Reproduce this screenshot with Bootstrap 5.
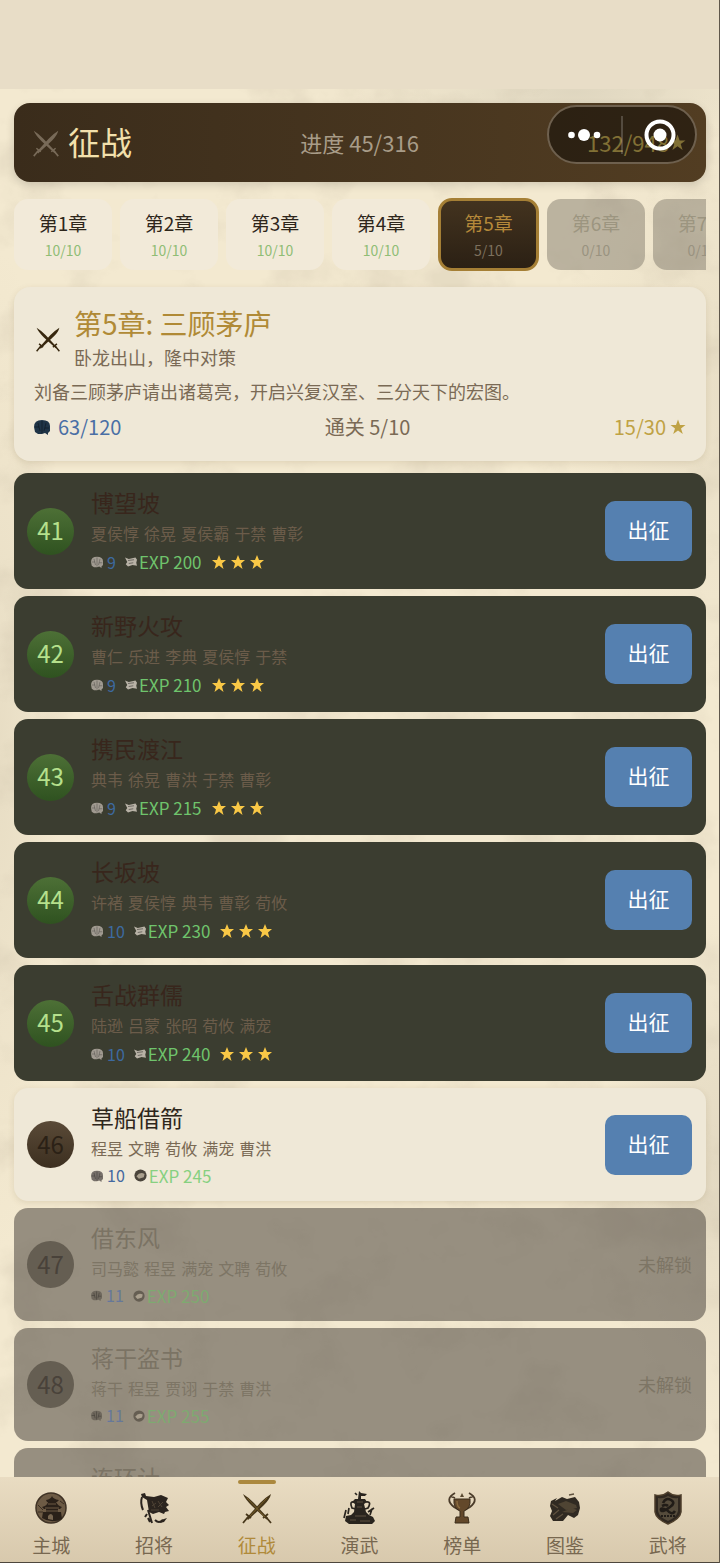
<!DOCTYPE html>
<html lang="zh-CN">
<head>
<meta charset="utf-8">
<meta name="viewport" content="width=device-width, initial-scale=1">
<title>征战</title>
<link href="https://cdn.jsdelivr.net/npm/bootstrap@5.3.0/dist/css/bootstrap.min.css" rel="stylesheet">
<style>
body{font-family:"Noto Sans CJK SC",sans-serif;color:#2e261b;background:#f2e8cf}
.app{border-right:1px solid #5f574b;background:radial-gradient(ellipse 60px 500px at 0 48%,#dcd1b880,transparent),radial-gradient(ellipse 220px 60px at 80% 92px,#d3cbb6a0,transparent),radial-gradient(ellipse 120px 260px at 100% 75%,#d6ccb690,transparent),radial-gradient(ellipse 160px 300px at 100% 25%,#dfd5bd80,transparent),#f3e9d0}
.paper{z-index:0;opacity:.22;pointer-events:none}
.statusbar{height:89px;background:#e8ddc7}
.content-area{padding:14px 13px 0 14px}
.hero{height:79px;padding:0 20px 0 18px;border-radius:16px;background:linear-gradient(90deg,#3a2c1b,#523d22);box-shadow:0 3px 8px #0002;margin-bottom:16px;font-size:22px;color:#a89c88}
.hero h1{font-size:32px;line-height:40px;color:#f2e0ac;font-weight:400}
.hero .total{color:#dfc15c}
.capsule{z-index:3;top:105px;right:22px;width:150px;height:59px;border:2px solid #6e604e;border-radius:30px;background:rgba(0,0,0,.42)}
.capsule i{width:2px;height:38px;background:#ffffff30}
.capsule button{border:0;background:none;padding:0;flex:1}
.chapters{gap:8px;margin-bottom:16px}
.chap{flex:0 0 98px;height:71px;border:0;border-radius:14px;background:#f2ead9;color:#2e261b;font-size:19px;line-height:28px;padding:2px 0 0}
.chap small{display:block;font-size:14px;line-height:26px;color:#8fbd75}
.chap.on{flex-basis:101px;height:73px;border:3px solid #a57f35;background:linear-gradient(#43331f,#2b2014);color:#b5893a}
.chap.on small{color:#7d705d}
.chap:disabled{background:#78726473;color:#9c9580}
.chap:disabled small{color:#999280}
.intro{border-radius:16px;background:#efe8d7;box-shadow:0 2px 6px #6b583225;padding:18px 20px 16px;margin-bottom:12px;color:#7a6a55;font-size:18px;line-height:36px}
.intro h2{font-size:28px;line-height:36px;color:#b08a36;font-weight:400}
.intro .lead-in{gap:13px;padding-left:1px}
.intro .sub{line-height:32px}
.intro .stats{font-size:20px}
.blue{color:#4a6fa5}.gold{color:#bfa244}
.stages{gap:7px}
.stage{border-radius:14px;padding:14px 14px 14px 13px;background:#3b3d30;color:#38261c}
.num{width:47px;height:47px;border-radius:50%;font-size:24px;line-height:28px;background:linear-gradient(#4d7036,#2f5220);color:#b5e08c;margin-right:17px;padding-bottom:2px}
.stage h3{font-size:23px;line-height:30px;font-weight:400}
.foes{font-family:"DejaVu Sans","Noto Sans CJK SC",sans-serif;font-size:16px;line-height:28px;color:#6b5c4a}
.info{font-size:17px;line-height:26px;color:#6fc46c}
.info svg{flex:none}
.info .cost{font-size:16px;color:#3d6aa0;margin:0 9px 0 4px}
.info .exp{margin:0 9px 0 2px}
.go{width:87px;height:60px;border:0;border-radius:10px;background:#5580b0;color:#fff;font-size:21px;padding-bottom:3px}
.stage.now{background:#efe8d7;color:#2e261b;box-shadow:0 2px 6px #6b583225}
.now .num{background:linear-gradient(#5a4a37,#3c2f20);color:#2b2116}
.now .foes{color:#7a6a55}.now .info{color:#86d080}.now .cost{color:#44689f}
.now .info,.locked .info{line-height:23px}
.stage.locked{background:#5a544b99;color:#7b7364}
.locked .num{background:#655e52;color:#49423a}
.locked .foes,.locked .state{color:#7d7565}
.locked .state{font-size:18px}
.locked .info{color:#7eaa70}.locked .cost{color:#66789a}
.stage.teaser{padding-left:77px;padding-bottom:65px}
.tabs{height:86px;background:linear-gradient(#e9dcc2,#d8c9ad);border-bottom:1px solid #4d463c;z-index:2}
.tabs a{flex:1 1 0;color:#786850;font-size:19px;line-height:28px;text-decoration:none;padding-top:13px}
.tabs svg{display:block;margin:0 auto 5px}
.tabs a.on{color:#b08a3a}
.tabs a.on::before{content:"";position:absolute;top:3px;left:50%;margin-left:-19px;width:38px;height:4px;border-radius:2px;background:#ab883e}
</style>
</head>
<body>
<svg width="0" height="0" class="position-absolute" aria-hidden="true">
<symbol id="swords" viewBox="0 0 32 32"><path d="M2 2Q7 5 13 11L27 26 25.500 27.500 11 14Q4 7 2 2ZM30 2Q29 7 23 13L7 28 5.500 26 19 11Q25 5 30 2Z"/><path d="M22 26L27 22M5 22L10 26M25 25L30 31M7 25L2 31" fill="none" stroke="currentColor" stroke-width="1.800"/></symbol>
<symbol id="fan" viewBox="0 0 16 16"><path d="M0 8Q0 1 8 1T16 7V12L14 14 14 16 11 14 8 15 4 15 1 13Z"/><path d="M8 2V14M4 4L6 12M12 4L10 12M1 8H5M11 9H15" stroke="#0005" fill="none"/></symbol>
<symbol id="scroll" viewBox="0 0 16 16"><path d="M0 2L5 4 14 2 16 5 15 9 16 13 10 12 4 14 1 11 3 8Z"/><path d="M4 6L12 5M5 10L11 9" stroke="#0008" fill="none"/></symbol>
<symbol id="coin" viewBox="0 0 16 16"><circle cx="8" cy="8" r="7.500"/><path d="M3 9Q7 3 13 6L12 10 6 12Z" fill="#aaa08e"/></symbol>
<symbol id="star" viewBox="0 0 16 16"><path d="M8 .5L10 6H15.500L11 9.400 12.800 15 8 11.600 3.200 15 5 9.400 .5 6H6Z"/></symbol>
<symbol id="stars" viewBox="0 0 54 16"><g fill="#f9c846"><path id="s1" d="M8 1L10 6H15L11 9.500 12.500 15 8 11.600 3.500 15 5 9.500 1 6H6Z"/><use href="#s1" x="19"/><use href="#s1" x="38"/></g></symbol>
</svg>
<div class="app position-relative d-flex flex-column vh-100 overflow-hidden">
<svg class="paper position-absolute w-100 h-100" aria-hidden="true"><filter id="grain"><feTurbulence type="fractalNoise" baseFrequency=".014 .016" numOctaves="5" seed="8"/><feColorMatrix values="0 0 0 0 .5 0 0 0 0 .43 0 0 0 0 .32 0 0 0 3 -1.500"/></filter><rect width="100%" height="100%" filter="url(#grain)"/></svg>
<div class="statusbar flex-shrink-0 position-relative"></div>
<div class="capsule position-absolute d-flex align-items-center">
<button class="d-flex justify-content-center" aria-label="更多"><svg width="34" height="14" fill="#fff"><circle cx="3.500" cy="7" r="3.300"/><circle cx="16" cy="7" r="6"/><circle cx="29" cy="7" r="3.300"/></svg></button><i></i>
<button class="d-flex justify-content-center" aria-label="关闭"><svg width="34" height="34"><circle cx="18" cy="17" r="13.500" fill="none" stroke="#fff" stroke-width="4"/><circle cx="18" cy="17" r="6.500" fill="#fff"/></svg></button>
</div>
<main class="content-area position-relative flex-grow-1 overflow-hidden">
<header class="hero d-flex align-items-center justify-content-between">
<div class="d-flex align-items-center"><svg width="28" height="28" fill="#786a58" color="#786a58" class="me-2"><use href="#swords"/></svg><h1 class="mb-1">征战</h1></div>
<span>进度 45/316</span>
<span class="total d-flex align-items-center">132/948<svg width="17" height="17" fill="currentColor"><use href="#star"/></svg></span>
</header>
<div class="chapters d-flex align-items-center overflow-hidden">
<button class="chap">第1章<small>10/10</small></button>
<button class="chap">第2章<small>10/10</small></button>
<button class="chap">第3章<small>10/10</small></button>
<button class="chap">第4章<small>10/10</small></button>
<button class="chap on">第5章<small>5/10</small></button>
<button class="chap" disabled>第6章<small>0/10</small></button>
<button class="chap" disabled>第7章<small>0/10</small></button>
</div>
<section class="intro">
<div class="lead-in d-flex align-items-center"><svg width="26" height="28" fill="#38280f" color="#38280f"><use href="#swords"/></svg><div><h2 class="m-0">第5章: 三顾茅庐</h2><div class="sub">卧龙出山，隆中对策</div></div></div>
<div>刘备三顾茅庐请出诸葛亮，开启兴复汉室、三分天下的宏图。</div>
<div class="stats d-flex justify-content-between"><span class="blue d-flex align-items-center"><svg width="16" height="16" fill="#1f3447" class="me-2"><use href="#fan"/></svg>63/120</span><span>通关 5/10</span><span class="gold d-flex align-items-center">15/30<svg width="16" height="16" fill="currentColor" class="ms-1"><use href="#star"/></svg></span></div>
</section>
<div class="stages d-flex flex-column">
<article class="stage d-flex align-items-center"><span class="num d-flex align-items-center justify-content-center">41</span><div class="flex-grow-1"><h3 class="mb-1">博望坡</h3><div class="foes">夏侯惇 徐晃 夏侯霸 于禁 曹彰</div><div class="info d-flex align-items-center"><svg width="12" height="12" fill="#a09a90"><use href="#fan"/></svg><span class="cost">9</span><svg width="12" height="12" fill="#b8b2a6"><use href="#scroll"/></svg><span class="exp">EXP 200</span><svg width="54" height="16"><use href="#stars"/></svg></div></div><button class="go">出征</button></article>
<article class="stage d-flex align-items-center"><span class="num d-flex align-items-center justify-content-center">42</span><div class="flex-grow-1"><h3 class="mb-1">新野火攻</h3><div class="foes">曹仁 乐进 李典 夏侯惇 于禁</div><div class="info d-flex align-items-center"><svg width="12" height="12" fill="#a09a90"><use href="#fan"/></svg><span class="cost">9</span><svg width="12" height="12" fill="#b8b2a6"><use href="#scroll"/></svg><span class="exp">EXP 210</span><svg width="54" height="16"><use href="#stars"/></svg></div></div><button class="go">出征</button></article>
<article class="stage d-flex align-items-center"><span class="num d-flex align-items-center justify-content-center">43</span><div class="flex-grow-1"><h3 class="mb-1">携民渡江</h3><div class="foes">典韦 徐晃 曹洪 于禁 曹彰</div><div class="info d-flex align-items-center"><svg width="12" height="12" fill="#a09a90"><use href="#fan"/></svg><span class="cost">9</span><svg width="12" height="12" fill="#b8b2a6"><use href="#scroll"/></svg><span class="exp">EXP 215</span><svg width="54" height="16"><use href="#stars"/></svg></div></div><button class="go">出征</button></article>
<article class="stage d-flex align-items-center"><span class="num d-flex align-items-center justify-content-center">44</span><div class="flex-grow-1"><h3 class="mb-1">长坂坡</h3><div class="foes">许褚 夏侯惇 典韦 曹彰 荀攸</div><div class="info d-flex align-items-center"><svg width="12" height="12" fill="#a09a90"><use href="#fan"/></svg><span class="cost">10</span><svg width="12" height="12" fill="#b8b2a6"><use href="#scroll"/></svg><span class="exp">EXP 230</span><svg width="54" height="16"><use href="#stars"/></svg></div></div><button class="go">出征</button></article>
<article class="stage d-flex align-items-center"><span class="num d-flex align-items-center justify-content-center">45</span><div class="flex-grow-1"><h3 class="mb-1">舌战群儒</h3><div class="foes">陆逊 吕蒙 张昭 荀攸 满宠</div><div class="info d-flex align-items-center"><svg width="12" height="12" fill="#a09a90"><use href="#fan"/></svg><span class="cost">10</span><svg width="12" height="12" fill="#b8b2a6"><use href="#scroll"/></svg><span class="exp">EXP 240</span><svg width="54" height="16"><use href="#stars"/></svg></div></div><button class="go">出征</button></article>
<article class="stage now d-flex align-items-center"><span class="num d-flex align-items-center justify-content-center">46</span><div class="flex-grow-1"><h3 class="mb-1">草船借箭</h3><div class="foes">程昱 文聘 荀攸 满宠 曹洪</div><div class="info d-flex align-items-center"><svg width="12" height="12" fill="#77706a"><use href="#fan"/></svg><span class="cost">10</span><svg width="13" height="13" fill="#4a443b"><use href="#coin"/></svg><span class="exp">EXP 245</span></div></div><button class="go">出征</button></article>
<article class="stage locked d-flex align-items-center"><span class="num d-flex align-items-center justify-content-center">47</span><div class="flex-grow-1"><h3 class="mb-1">借东风</h3><div class="foes">司马懿 程昱 满宠 文聘 荀攸</div><div class="info d-flex align-items-center"><svg width="11" height="11" fill="#6f685d"><use href="#fan"/></svg><span class="cost">11</span><svg width="12" height="12" fill="#655e52"><use href="#coin"/></svg><span class="exp">EXP 250</span></div></div><span class="state">未解锁</span></article>
<article class="stage locked d-flex align-items-center"><span class="num d-flex align-items-center justify-content-center">48</span><div class="flex-grow-1"><h3 class="mb-1">蒋干盗书</h3><div class="foes">蒋干 程昱 贾诩 于禁 曹洪</div><div class="info d-flex align-items-center"><svg width="11" height="11" fill="#6f685d"><use href="#fan"/></svg><span class="cost">11</span><svg width="12" height="12" fill="#655e52"><use href="#coin"/></svg><span class="exp">EXP 255</span></div></div><span class="state">未解锁</span></article>
<article class="stage locked teaser"><h3 class="mb-1">连环计</h3></article>
</div>
</main>
<nav class="tabs d-flex flex-shrink-0 text-center">
<a href="#"><svg width="34" height="36" viewBox="0 0 34 36"><circle cx="17" cy="18" r="15" fill="#6d5b45" stroke="#3f3225" stroke-width="1.500"/><path d="M12 10Q17 9 18 6Q19 9 25 10L23 12H13ZM8 17Q13 16 14 12H22Q24 16 28 17L26 19H10ZM12 19H24V22H12ZM9 22H27L28 29Q17 34 8 28Z" fill="#2a2119"/><path d="M14 29V26Q17 22 19 26V30Z" fill="#776650"/><path d="M14 14H22M11 18H25M12 21H24" stroke="#6d5b45"/><path d="M4 15L9 20M26 11L30 14M4 22H9" stroke="#3a2e22" fill="none"/></svg>主城</a>
<a href="#"><svg width="34" height="36" viewBox="0 0 34 36"><path d="M4 4L8 3 9 6 17 7 24 5 31 8 29 12 32 15 29 17 32 21 28 22 27 24 22 22 16 24 12 22 10 10 5 7Z" fill="#2b241e"/><path d="M5 7Q3 13 6 20M11 20L15 33M18 30Q22 34 26 30M11 28L13 32M10 24L8 27" stroke="#2b241e" stroke-width="2" fill="none"/><path d="M15 11L18 18M15 16L19 13M21 11L25 17M21 17L26 12M14 20H22" stroke="#4f4335" fill="none"/><path d="M24 30L30 28 27 32 23 33Z" fill="#2b241e"/></svg>招将</a>
<a href="#" class="on position-relative" aria-current="page"><svg width="34" height="36" viewBox="-1 0 34 36" fill="#46361a" color="#46361a"><use href="#swords" y="1" width="32" height="34"/><path d="M6 8L24 27M26 8L9 26" stroke="#8a6d2d" stroke-width=".7"/></svg>征战</a>
<a href="#"><svg width="34" height="36" viewBox="0 0 34 36" fill="#29241e"><path d="M16 1L18 3 24 4 22 6 18 6V9H22L24 12 21 14 23 22 26 25 30 27 32 31 29 34H6L2 31 3 26 8 25 11 22 12 14 9 12 12 9H15Z"/><path d="M12 3L14 5M11 12Q6 11 9 18L13 19M23 12Q29 11 25 18L22 19M6 18L5 24M29 19L27 25M3 20L1 28M25 22L31 18" fill="none" stroke="#29241e" stroke-width="1.700"/><path d="M14 12H20M14 17H19M12 26H23M7 30H13M17 31H27" stroke="#5e5140" fill="none"/></svg>演武</a>
<a href="#"><svg width="30" height="36" viewBox="0 0 30 36"><path d="M8 3Q-3 9 7 17L12 20M22 3Q33 9 23 17L18 20M3 6L8 8M22 8L27 6" fill="none" stroke="#4a3b29" stroke-width="1.800"/><path d="M7 9H23Q24 18 17 21V27H21L22 33H8L9 27H13V21Q6 18 7 9Z" fill="#63482a" stroke="#3b2c1b" stroke-width="1"/><path d="M15 3L17 7H13Z" fill="#5a4931"/><path d="M10 11Q10 17 13 18" stroke="#8a6a3e" stroke-width="1.500" fill="none"/></svg>榜单</a>
<a href="#"><svg width="34" height="36" viewBox="0 0 34 36"><path d="M3 11L9 8 7 11 14 7 19 9 27 7 31 12 32 18 30 25 26 28 20 25 15 31 5 31 2 26 4 21 2 16Z" fill="#302a22"/><path d="M10 14L18 11 28 15 29 18 18 20ZM14 22L24 18 29 20 25 23Z" fill="#4f4433"/><path d="M21 5L26 4M5 25L11 20M8 29L15 24M4 14L10 18" stroke="#5f523f" stroke-width="1.300"/></svg>图鉴</a>
<a href="#"><svg width="30" height="36" viewBox="0 0 30 36"><path d="M2 5Q9 7 15 2Q21 7 28 5L28 22Q27 29 15 34Q3 29 2 22Z" fill="#302820" stroke="#4d3e2b" stroke-width="1.500"/><path d="M5 8Q11 9 15 6Q20 9 25 8V21Q24 27 15 31Q6 27 5 21Z" fill="#554b3b"/><path d="M10 13Q13 7 18 10T17 17Q9 23 8 20T14 20Q19 26 22 21M9 16Q13 14 15 16" fill="none" stroke="#211c17" stroke-width="2.600"/><path d="M8 26H22" stroke="#211c17" stroke-width="2" stroke-dasharray="2 1"/></svg>武将</a>
</nav>
</div>
<script src="https://cdn.jsdelivr.net/npm/bootstrap@5.3.0/dist/js/bootstrap.bundle.min.js"></script>
</body>
</html>
